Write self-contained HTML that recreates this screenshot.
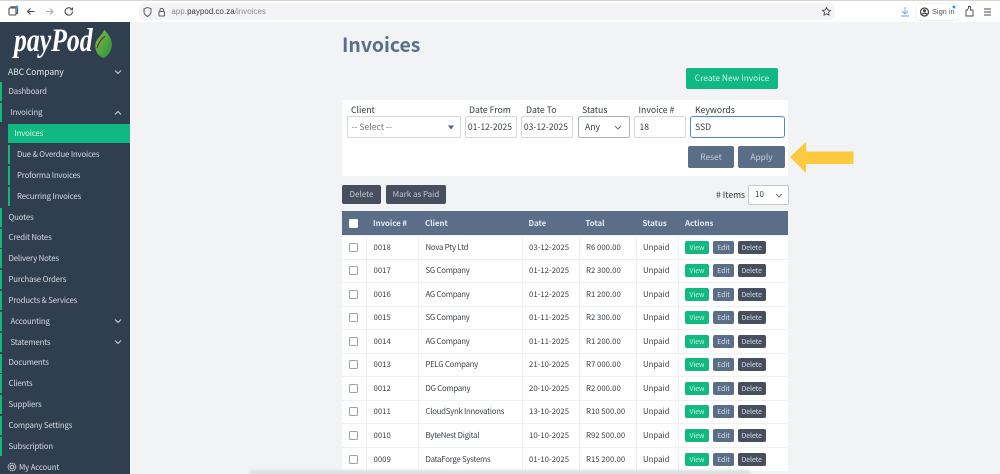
<!DOCTYPE html>
<html><head><meta charset="utf-8"><title>Invoices</title>
<style>
*{box-sizing:border-box}
html,body{margin:0;padding:0}
body{width:1000px;height:474px;overflow:hidden;background:#f2f3f5;position:relative;font-family:"Noto Sans CJK JP","DejaVu Sans",sans-serif;color:#333}
.a{position:absolute;white-space:nowrap}
#wrap{position:absolute;left:0;top:0;width:1000px;height:474px;overflow:hidden;filter:blur(.3px)}
#top{left:0;top:0;width:1000px;height:22px;background:#fff;border-top:1px solid #d8d6d0}
#url{left:139px;top:3px;width:696px;height:17px;background:#f4f4f6;border-radius:5px}
#side{left:0;top:22px;width:130px;height:452px;background:#303f4f}
.m{position:absolute;left:8.5px;margin-top:.2px;font-size:7.8px;letter-spacing:-.15px;line-height:10px;color:#d5dade;white-space:nowrap}
.m.p{left:10.5px}.m.s{left:17px}
.bar{position:absolute;left:0;width:2px;height:19px;background:#10b981}
.bar.s{left:8px}
.chev{position:absolute;left:114px;width:8px;height:6px}
.btn{position:absolute;border-radius:2px;color:#d5dbe1;font-size:8px;text-align:center;white-space:nowrap}
.lbl{position:absolute;font-size:8.7px;line-height:10px;color:#33393f;white-space:nowrap}
.inp{position:absolute;top:116px;height:22px;background:#fff;border:1px solid #d4d8dd;border-radius:2px;font-size:8.6px;line-height:20.5px;color:#3a4148;white-space:nowrap;overflow:hidden}
table{position:absolute;left:342px;top:211px;width:446px;border-collapse:collapse;table-layout:fixed;background:#fff;font-size:7.8px;color:#3d444c}
th{height:24.6px;background:#5a6f87;color:#e8ecf0;text-align:left;padding:0 0 0 6.5px;font-size:7.8px;font-weight:700}
td{height:23.5px;padding:0 0 0 6.5px;border-top:1px solid #eef0f2;border-left:1px solid #eef0f2;white-space:nowrap}
td:nth-child(3){letter-spacing:-.25px}
td:first-child,th:first-child{border-left:0;padding-left:7px}
.cb{display:block;width:9px;height:9px;border:1px solid #9aa1a9;border-radius:1.5px;background:#fff}
td:last-child{line-height:13px;padding-left:6px;font-size:0}
.b{display:inline-block;height:13px;line-height:13px;border-radius:2px;font-size:6.8px;text-align:center;color:#d7e0e6;vertical-align:top;margin-right:4px}
.v{width:24px;background:#10b981;color:#c9f2e0}.e{width:21px;background:#5a6f87}.d{width:27.5px;background:#474f5e;margin-right:0}
</style></head>
<body><div id="wrap">
<div class="a" id="top"></div>
<div class="a" id="url"></div>
<svg class="a" style="left:0;top:0" width="140" height="22" viewBox="0 0 140 22" fill="none" stroke="#4a4a50" stroke-width="1.1">
<rect x="9" y="8" width="7" height="7" rx="1"/><path d="M11 8V6.8h6.5v6.5H16"/><circle cx="16.8" cy="7" r="1.5" fill="#1a9ff0" stroke="none"/>
<path d="M27.5 11.5h7M30.5 8.5l-3 3 3 3"/>
<path d="M46 11.5h7M50 8.5l3 3-3 3" stroke="#aaa"/>
<path d="M72.5 11.5a3.7 3.7 0 1 1-1-2.6M72.5 7.5v2.2h-2.2"/>
</svg>
<svg class="a" style="left:140px;top:4px" width="30" height="16" viewBox="0 0 30 16" fill="none" stroke="#5c5c62" stroke-width="1">
<path d="M7.500 3.500l3.500 1.200v3c0 2.500-1.500 3.800-3.500 4.800-2-1-3.500-2.300-3.500-4.800v-3z"/>
<rect x="19" y="7.500" width="5.500" height="4.500" rx=".6"/><path d="M20 7.500V5.800a1.800 1.800 0 0 1 3.500 0v1.700"/>
</svg>
<div class="a" style="left:171.500px;top:6.500px;font-size:7.800px;line-height:10px;color:#8b8b92;font-family:'Liberation Sans',sans-serif;letter-spacing:.1px">app.<span style="color:#33343a">paypod.co.za</span>/invoices</div>
<svg class="a" style="left:780px;top:0" width="220" height="22" viewBox="0 0 220 22" fill="none" stroke="#4a4a50" stroke-width=".9">
<path d="M46.500 7.500l1.200 2.500 2.800.4-2 1.900.5 2.800-2.500-1.300-2.500 1.300.5-2.800-2-1.900 2.800-.4z"/>
<path d="M125 7v7M122 11l3 3 3-3M121 16h8" stroke="#6aa5ee"/>
<rect x="136" y="3.500" width="42" height="17" rx="3" stroke="#f0f0f2"/>
<circle cx="144.500" cy="12" r="4" stroke="#3f3f45" stroke-width="1.200"/><circle cx="144.500" cy="10.700" r="1.500" fill="#3f3f45" stroke="none"/><path d="M141.500 14.500c1-1.500 5-1.500 6 0" stroke-width="1.200"/>
<circle cx="174" cy="7" r="1.500" fill="#1a9ff0" stroke="none"/>
<path d="M186 16V10h1.500l1-2V6.500h2V10H193v6z"/>
<path d="M204 9h7M204 12h7M204 15h7" stroke-width="1.100"/>
</svg>
<div class="a" style="left:932px;top:7px;font-size:7.400px;line-height:10px;color:#55555c;font-family:'Liberation Sans',sans-serif">Sign in</div>

<div class="a" id="side"></div>
<div class="a" style="left:14px;top:22px;font:italic 700 33px/38px 'Liberation Serif',serif;color:#fff;transform-origin:0 0;transform:scaleX(.78)">payPod</div>
<svg class="a" style="left:94px;top:28px" width="20" height="33" viewBox="0 0 20 33">
<defs><linearGradient id="lf" x1="0" y1="0" x2="1" y2="1"><stop offset="0" stop-color="#7cc04a"/><stop offset="1" stop-color="#2e8f38"/></linearGradient></defs>
<path d="M10.500 1.500C12 5 17 7.500 17.800 15c.6 7-3.800 13.500-8.300 15C5 28.500 1 24 1.200 17.500 1.500 11 7.500 8 10.500 1.500z" fill="url(#lf)"/>
<path d="M3 20C4.500 15 7 10.800 11 8.200" stroke="#6b2d18" stroke-width="1.100" fill="none"/>
</svg>
<div class="m" style="left:8px;top:66.800px;font-size:8.600px;letter-spacing:-.1px;color:#e4e8eb">ABC Company</div>
<svg class="chev" style="top:69px" viewBox="0 0 8 6" fill="none" stroke="#cfd5da" stroke-width="1"><path d="M1 1.500l3 3 3-3"/></svg>

<i class="bar" style="top:82px"></i><div class="m" style="top:86.500px">Dashboard</div>
<i class="bar" style="top:103px"></i><div class="m p" style="top:107.500px">Invoicing</div>
<svg class="chev" style="top:110px" viewBox="0 0 8 6" fill="none" stroke="#cfd5da" stroke-width="1"><path d="M1 4.500l3-3 3 3"/></svg>
<div class="a" style="left:8px;top:124px;width:122px;height:19px;background:#10b981"></div>
<div class="m" style="left:14.500px;top:128.500px;color:#dff5ec">Invoices</div>
<i class="bar s" style="top:145px"></i><div class="m s" style="top:149.500px">Due &amp; Overdue Invoices</div>
<i class="bar s" style="top:165.500px"></i><div class="m s" style="top:170.500px">Proforma Invoices</div>
<i class="bar s" style="top:186.500px"></i><div class="m s" style="top:191.500px">Recurring Invoices</div>
<i class="bar" style="top:207.500px"></i><div class="m" style="top:212.500px">Quotes</div>
<i class="bar" style="top:228.500px"></i><div class="m" style="top:233px">Credit Notes</div>
<i class="bar" style="top:249px"></i><div class="m" style="top:254px">Delivery Notes</div>
<i class="bar" style="top:270px"></i><div class="m" style="top:275px">Purchase Orders</div>
<i class="bar" style="top:291px"></i><div class="m" style="top:295.500px">Products &amp; Services</div>
<i class="bar" style="top:312px"></i><div class="m p" style="top:316.500px">Accounting</div>
<svg class="chev" style="top:318px" viewBox="0 0 8 6" fill="none" stroke="#cfd5da" stroke-width="1"><path d="M1 1.500l3 3 3-3"/></svg>
<i class="bar" style="top:332.500px"></i><div class="m p" style="top:337.500px">Statements</div>
<svg class="chev" style="top:339px" viewBox="0 0 8 6" fill="none" stroke="#cfd5da" stroke-width="1"><path d="M1 1.500l3 3 3-3"/></svg>
<i class="bar" style="top:353.500px"></i><div class="m" style="top:358px">Documents</div>
<i class="bar" style="top:374px"></i><div class="m" style="top:379px">Clients</div>
<i class="bar" style="top:395px"></i><div class="m" style="top:400px">Suppliers</div>
<i class="bar" style="top:416px"></i><div class="m" style="top:420.500px">Company Settings</div>
<i class="bar" style="top:437px"></i><div class="m" style="top:441.500px">Subscription</div>
<svg class="a" style="left:7px;top:462px" width="10" height="10" viewBox="0 0 10 10" fill="none" stroke="#d5dade" stroke-width="1"><circle cx="5" cy="5" r="1.800"/><circle cx="5" cy="5" r="3.800" stroke-dasharray="1.600 .6"/></svg>
<div class="m" style="left:19px;top:462.500px">My Account</div>

<div class="a" style="left:342px;top:31px;font-size:19.400px;line-height:26px;font-weight:700;color:#5a6f87">Invoices</div>
<div class="btn" style="left:686px;top:68px;width:92px;height:21px;line-height:21px;background:#10b981;color:#d4f5e7;font-size:8.400px">Create New Invoice</div>

<div class="a" style="left:342px;top:100px;width:446px;height:76px;background:#fff"></div>
<div class="lbl" style="left:351px;top:105px">Client</div>
<div class="lbl" style="left:469px;top:105px">Date From</div>
<div class="lbl" style="left:526px;top:105px">Date To</div>
<div class="lbl" style="left:582px;top:105px">Status</div>
<div class="lbl" style="left:638.500px;top:105px">Invoice #</div>
<div class="lbl" style="left:695px;top:105px">Keywords</div>
<div class="inp" style="left:346.500px;width:114px;padding-left:4px;color:#777">-- Select --</div>
<svg class="a" style="left:447px;top:125px" width="8" height="5" viewBox="0 0 8 5"><path d="M1 .5h6L4 4.500z" fill="#4f6478"/></svg>
<div class="inp" style="left:465px;width:52px;text-align:right;padding-right:4px">01-12-2025</div>
<div class="inp" style="left:521px;width:52px;text-align:right;padding-right:4px">03-12-2025</div>
<div class="inp" style="left:578px;width:52px;padding-left:6px;border-color:#aab0b8">Any</div>
<svg class="a" style="left:614px;top:125px" width="8" height="5" viewBox="0 0 8 5" fill="none" stroke="#666" stroke-width=".9"><path d="M1 1l3 3 3-3"/></svg>
<div class="inp" style="left:634px;width:52px;padding-left:4.500px">18</div>
<div class="inp" style="left:690px;width:95px;padding-left:4px;border:1.200px solid #4a86e8;border-radius:3px">SSD</div>
<div class="btn" style="left:688px;top:146px;width:46px;height:22px;line-height:22px;background:#5a6f87;color:#c5ced7;font-size:8.400px">Reset</div>
<div class="btn" style="left:738px;top:146px;width:47px;height:22px;line-height:22px;background:#5a6f87;color:#c5ced7;font-size:8.400px">Apply</div>
<svg class="a" style="left:788px;top:141px" width="68" height="33" viewBox="0 0 68 33"><path d="M2 16L18 1v9.500h47.500v12.500H18v9z" fill="#fdc93f"/></svg>

<div class="btn" style="left:342px;top:185px;width:39px;height:19px;line-height:19px;background:#474f5e;color:#c3c8cf">Delete</div>
<div class="btn" style="left:386px;top:185px;width:60px;height:19px;line-height:19px;background:#474f5e;color:#c3c8cf">Mark as Paid</div>
<div class="lbl" style="left:716px;top:190px;font-size:8.600px">#&nbsp;Items</div>
<div class="inp" style="left:748px;top:185px;width:41px;height:20px;line-height:18px;padding-left:6px;font-size:8px;border-color:#c3c8ce">10</div>
<svg class="a" style="left:775px;top:193px" width="8" height="5" viewBox="0 0 8 5" fill="none" stroke="#666" stroke-width=".9"><path d="M1 1l3 3 3-3"/></svg>

<table>
<colgroup><col style="width:24.500px"><col style="width:52px"><col style="width:103.500px"><col style="width:57px"><col style="width:57px"><col style="width:42.500px"><col></colgroup>
<tr><th><span class="cb" style="border-color:#fff"></span></th><th>Invoice #</th><th>Client</th><th>Date</th><th>Total</th><th>Status</th><th>Actions</th></tr>
<tr><td><span class="cb"></span></td><td>0018</td><td>Nova Pty Ltd</td><td>03-12-2025</td><td>R6 000.00</td><td>Unpaid</td><td><span class="b v">View</span><span class="b e">Edit</span><span class="b d">Delete</span></td></tr>
<tr><td><span class="cb"></span></td><td>0017</td><td>SG Company</td><td>01-12-2025</td><td>R2 300.00</td><td>Unpaid</td><td><span class="b v">View</span><span class="b e">Edit</span><span class="b d">Delete</span></td></tr>
<tr><td><span class="cb"></span></td><td>0016</td><td>AG Company</td><td>01-12-2025</td><td>R1 200.00</td><td>Unpaid</td><td><span class="b v">View</span><span class="b e">Edit</span><span class="b d">Delete</span></td></tr>
<tr><td><span class="cb"></span></td><td>0015</td><td>SG Company</td><td>01-11-2025</td><td>R2 300.00</td><td>Unpaid</td><td><span class="b v">View</span><span class="b e">Edit</span><span class="b d">Delete</span></td></tr>
<tr><td><span class="cb"></span></td><td>0014</td><td>AG Company</td><td>01-11-2025</td><td>R1 200.00</td><td>Unpaid</td><td><span class="b v">View</span><span class="b e">Edit</span><span class="b d">Delete</span></td></tr>
<tr><td><span class="cb"></span></td><td>0013</td><td>PELG Company</td><td>21-10-2025</td><td>R7 000.00</td><td>Unpaid</td><td><span class="b v">View</span><span class="b e">Edit</span><span class="b d">Delete</span></td></tr>
<tr><td><span class="cb"></span></td><td>0012</td><td>DG Company</td><td>20-10-2025</td><td>R2 000.00</td><td>Unpaid</td><td><span class="b v">View</span><span class="b e">Edit</span><span class="b d">Delete</span></td></tr>
<tr><td><span class="cb"></span></td><td>0011</td><td>CloudSynk Innovations</td><td>13-10-2025</td><td>R10 500.00</td><td>Unpaid</td><td><span class="b v">View</span><span class="b e">Edit</span><span class="b d">Delete</span></td></tr>
<tr><td><span class="cb"></span></td><td>0010</td><td>ByteNest Digital</td><td>10-10-2025</td><td>R92 500.00</td><td>Unpaid</td><td><span class="b v">View</span><span class="b e">Edit</span><span class="b d">Delete</span></td></tr>
<tr><td><span class="cb"></span></td><td>0009</td><td>DataForge Systems</td><td>01-10-2025</td><td>R15 200.00</td><td>Unpaid</td><td><span class="b v">View</span><span class="b e">Edit</span><span class="b d">Delete</span></td></tr>
</table>
<div class="a" style="left:250px;top:470px;width:500px;height:4px;background:linear-gradient(#e6e7e9,#c9cacc);filter:blur(1.500px)"></div>
</div></body></html>
